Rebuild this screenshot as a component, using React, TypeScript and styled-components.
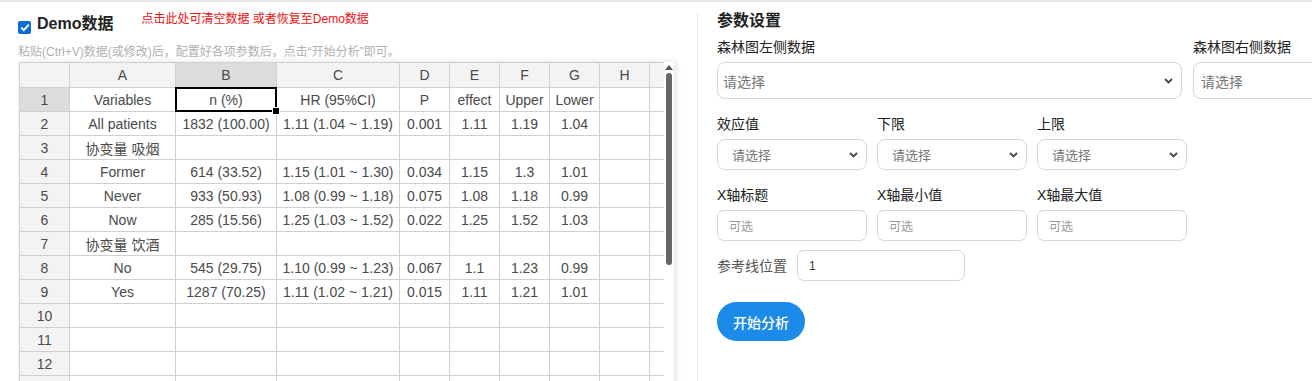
import styled, { createGlobalStyle } from "styled-components";

const GlobalStyle = createGlobalStyle`
  html, body {
    margin: 0;
    padding: 0;
    background: #fff;
    overflow: hidden;
    font-family: "Liberation Sans", "Noto Sans CJK SC", sans-serif;
  }
`;

const Page = styled.div`
  display: flex;
  border-top: 2px solid #e6e6e6;
  width: 1400px;
  height: 379px;
`;

const LeftPanel = styled.div`
  width: 679px;
  flex-shrink: 0;
  padding: 10px 0 0 18px;
`;

const TitleRow = styled.div`
  display: flex;
  align-items: flex-start;
  height: 32px;
`;

const Check = styled.span`
  width: 13px;
  height: 13px;
  margin-top: 9px;
  border-radius: 2px;
  background: #0b6ed8;
  display: flex;
  align-items: center;
  justify-content: center;
`;

const DemoLabel = styled.span`
  margin-left: 6px;
  font-size: 16px;
  font-weight: bold;
  color: #222;
  line-height: 24px;
`;

const ResetLink = styled.span`
  margin-left: 28px;
  font-size: 12px;
  color: #f01010;
  line-height: 14px;
`;

const Hint = styled.div`
  font-size: 12px;
  color: #b0b0b0;
  line-height: 16px;
  height: 18px;
`;

const GridBox = styled.div`
  display: flex;
  width: 655px;
  height: 330px;
  margin-left: 1px;
  box-shadow: 2px 0 6px rgba(0, 0, 0, 0.12);
`;

const GridView = styled.div`
  width: 645px;
  overflow: hidden;
`;

const Table = styled.table`
  border-collapse: collapse;
  table-layout: fixed;
  width: 680px;
  font-size: 14px;
  color: #4a4a4a;
`;

const HeadCell = styled.th<{ $active?: boolean }>`
  height: 24px;
  border: 1px solid #cfcfcf;
  background: ${(p) => (p.$active ? "#dcdcdc" : "#f3f3f3")};
  font-weight: normal;
  text-align: center;
  padding: 0;
`;

const RowHead = styled.td<{ $active?: boolean }>`
  height: 23px;
  border: 1px solid #cfcfcf;
  background: ${(p) => (p.$active ? "#dcdcdc" : "#f3f3f3")};
  text-align: center;
  padding: 0;
`;

const Cell = styled.td<{ $selected?: boolean }>`
  height: 23px;
  border: 1px solid #cfcfcf;
  text-align: center;
  padding: 0;
  white-space: nowrap;
  overflow: hidden;
  position: relative;
  ${(p) =>
    p.$selected &&
    `
    overflow: visible;
    &::before {
      content: "";
      position: absolute;
      inset: -1px;
      border: 2px solid #000;
      pointer-events: none;
    }
    &::after {
      content: "";
      position: absolute;
      right: -4px;
      bottom: -4px;
      width: 6px;
      height: 6px;
      background: #000;
      border: 1px solid #fff;
      z-index: 2;
    }
  `}
`;

const ScrollTrack = styled.div`
  width: 10px;
  display: flex;
  flex-direction: column;
  align-items: center;
  padding-top: 3px;
`;

const ScrollArrow = styled.div`
  width: 0;
  height: 0;
  border-left: 4px solid transparent;
  border-right: 4px solid transparent;
  border-bottom: 5px solid #555;
`;

const ScrollThumb = styled.div`
  margin-top: 3px;
  width: 6px;
  height: 192px;
  border-radius: 3px;
  background: #666;
`;

const RightPanel = styled.div`
  margin-top: 11px;
  border-left: 1px solid #ececec;
  padding: 0 0 0 19px;
  width: 700px;
`;

const SectionTitle = styled.div`
  font-size: 16px;
  font-weight: bold;
  color: #222;
  line-height: 16px;
  height: 25px;
`;

const Label = styled.div<{ $muted?: boolean }>`
  font-size: 14px;
  color: ${(p) => (p.$muted ? "#555" : "#222")};
  line-height: 18px;
`;

const WideRow = styled.div`
  display: grid;
  grid-template-columns: 465px 465px;
  column-gap: 11px;
`;

const ThreeRow = styled.div`
  display: grid;
  grid-template-columns: repeat(3, 150px);
  column-gap: 10px;
  margin-top: 16px;
`;

const Field = styled.div`
  display: flex;
  flex-direction: column;
  gap: 6px;
`;

const SelectBox = styled.div<{ $h: number; $pad: number; $size: number }>`
  height: ${(p) => p.$h}px;
  box-sizing: border-box;
  border: 1px solid #d3d6dc;
  border-radius: 8px;
  display: flex;
  align-items: center;
  justify-content: space-between;
  padding: 0 8px 0 ${(p) => p.$pad}px;
  font-size: ${(p) => p.$size}px;
  color: #777;
`;

const TextBox = styled.div<{ $w?: number; $dark?: boolean }>`
  height: 31px;
  width: ${(p) => (p.$w ? `${p.$w}px` : "auto")};
  box-sizing: border-box;
  border: 1px solid #d3d6dc;
  border-radius: 7px;
  display: flex;
  align-items: center;
  padding-left: 11px;
  font-size: 12px;
  color: ${(p) => (p.$dark ? "#333" : "#999")};
`;

const RefRow = styled.div`
  display: flex;
  align-items: center;
  gap: 10px;
  margin-top: 9px;
`;

const StartButton = styled.button`
  margin-top: 21px;
  width: 88px;
  height: 39px;
  border: none;
  border-radius: 20px;
  background: #1b8ae8;
  color: #fff;
  font-size: 14px;
  font-weight: 500;
  font-family: "Noto Sans CJK SC", sans-serif;
`;

const Chevron = () => (
  <svg width="9" height="6" viewBox="0 0 9 6">
    <path d="M1 1l3.5 3.5L8 1" fill="none" stroke="#444" strokeWidth="1.8" />
  </svg>
);

const columns = [
  { key: "A", w: 106 },
  { key: "B", w: 101 },
  { key: "C", w: 123 },
  { key: "D", w: 50 },
  { key: "E", w: 50 },
  { key: "F", w: 50 },
  { key: "G", w: 50 },
  { key: "H", w: 50 },
  { key: "I", w: 50 },
];

const rows: string[][] = [
  ["Variables", "n (%)", "HR (95%CI)", "P", "effect", "Upper", "Lower"],
  ["All patients", "1832 (100.00)", "1.11 (1.04 ~ 1.19)", "0.001", "1.11", "1.19", "1.04"],
  ["协变量 吸烟"],
  ["Former", "614 (33.52)", "1.15 (1.01 ~ 1.30)", "0.034", "1.15", "1.3", "1.01"],
  ["Never", "933 (50.93)", "1.08 (0.99 ~ 1.18)", "0.075", "1.08", "1.18", "0.99"],
  ["Now", "285 (15.56)", "1.25 (1.03 ~ 1.52)", "0.022", "1.25", "1.52", "1.03"],
  ["协变量 饮酒"],
  ["No", "545 (29.75)", "1.10 (0.99 ~ 1.23)", "0.067", "1.1", "1.23", "0.99"],
  ["Yes", "1287 (70.25)", "1.11 (1.02 ~ 1.21)", "0.015", "1.11", "1.21", "1.01"],
  [],
  [],
  [],
];

function App() {
  return (
    <>
      <GlobalStyle />
      <Page>
        <LeftPanel>
          <TitleRow>
            <Check>
              <svg width="10" height="9" viewBox="0 0 10 9">
                <path d="M1.2 4.6l2.6 2.6L8.8 1.6" fill="none" stroke="#fff" strokeWidth="1.9" />
              </svg>
            </Check>
            <DemoLabel>Demo数据</DemoLabel>
            <ResetLink>点击此处可清空数据 或者恢复至Demo数据</ResetLink>
          </TitleRow>
          <Hint>粘贴(Ctrl+V)数据(或修改)后，配置好各项参数后，点击“开始分析”即可。</Hint>
          <GridBox>
            <GridView>
              <Table>
                <colgroup>
                  <col style={{ width: 50 }} />
                  {columns.map((c) => (
                    <col key={c.key} style={{ width: c.w }} />
                  ))}
                </colgroup>
                <thead>
                  <tr>
                    <HeadCell />
                    {columns.map((c) => (
                      <HeadCell key={c.key} $active={c.key === "B"}>
                        {c.key === "I" ? "" : c.key}
                      </HeadCell>
                    ))}
                  </tr>
                </thead>
                <tbody>
                  {rows.map((r, i) => (
                    <tr key={i}>
                      <RowHead $active={i === 0}>{i + 1}</RowHead>
                      {columns.map((c, j) => (
                        <Cell key={c.key} $selected={i === 0 && j === 1}>
                          {r[j] ?? ""}
                        </Cell>
                      ))}
                    </tr>
                  ))}
                  <tr>
                    <RowHead />
                    {columns.map((c) => (
                      <Cell key={c.key} />
                    ))}
                  </tr>
                </tbody>
              </Table>
            </GridView>
            <ScrollTrack>
              <ScrollArrow />
              <ScrollThumb />
            </ScrollTrack>
          </GridBox>
        </LeftPanel>

        <RightPanel>
          <SectionTitle>参数设置</SectionTitle>
          <WideRow>
            <Field>
              <Label>森林图左侧数据</Label>
              <SelectBox $h={37} $pad={5} $size={14}>
                请选择
                <Chevron />
              </SelectBox>
            </Field>
            <Field>
              <Label>森林图右侧数据</Label>
              <SelectBox $h={37} $pad={7} $size={14}>
                请选择
                <Chevron />
              </SelectBox>
            </Field>
          </WideRow>
          <ThreeRow>
            {["效应值", "下限", "上限"].map((t) => (
              <Field key={t}>
                <Label>{t}</Label>
                <SelectBox $h={31} $pad={14} $size={13}>
                  请选择
                  <Chevron />
                </SelectBox>
              </Field>
            ))}
          </ThreeRow>
          <ThreeRow>
            {["X轴标题", "X轴最小值", "X轴最大值"].map((t) => (
              <Field key={t}>
                <Label>{t}</Label>
                <TextBox>可选</TextBox>
              </Field>
            ))}
          </ThreeRow>
          <RefRow>
            <Label $muted>参考线位置</Label>
            <TextBox $w={168} $dark>
              1
            </TextBox>
          </RefRow>
          <StartButton>开始分析</StartButton>
        </RightPanel>
      </Page>
    </>
  );
}

export default App;
